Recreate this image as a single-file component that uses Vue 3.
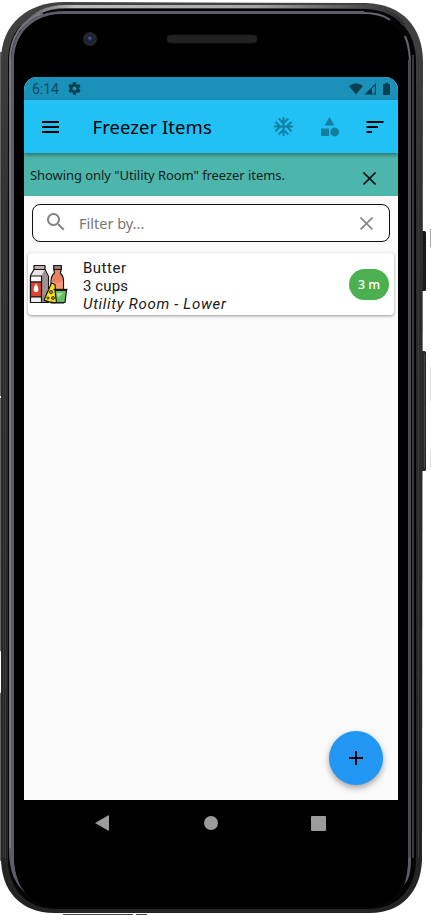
<script setup>
const item = { name: 'Butter', amount: '3 cups', place: 'Utility Room - Lower', age: '3 m' }
</script>

<template>
  <div class="device">
    <svg class="shell" viewBox="0 0 431 915" width="431" height="915">
      <defs>
        <linearGradient id="rim" x1="0" y1="0" x2="1" y2="0">
          <stop offset="0" stop-color="#555" />
          <stop offset=".14" stop-color="#bdbdbd" />
          <stop offset=".6" stop-color="#a6a6a6" />
          <stop offset="1" stop-color="#2c2c2e" />
        </linearGradient>
        <linearGradient id="fade" x1="0" y1="0" x2="0" y2="1">
          <stop offset="0" stop-color="#424242" />
          <stop offset=".25" stop-color="#2e2e2e" />
          <stop offset="1" stop-color="#232323" />
        </linearGradient>
      </defs>
      <path fill="#646464" d="M0 52h2v344H0zM0 398h2v253H0zM0 693h2v168H0z" />
      <rect x="421" y="231" width="5" height="60" rx="1.500" fill="#191919" />
      <rect x="421" y="351" width="5" height="120" rx="1.500" fill="#292929" />
      <path stroke="#444" d="M424.500 354v114" />
      <path stroke="#aaa" d="M430.500 229v18" />
      <path stroke="#ddd" d="M430.500 367v34M430.500 450v18" />
      <path fill="url(#fade)" d="M1 60C1 24 28 2 64 2L366 3C402 4 423 27 423 62L422 860C421 892 401 913 370 913H54C21 913 1 891 1 858Z" />
      <path fill="#050505" d="M8 61C8 28 31 9 65 9H363C396 9 416 30 416 62V858C416 889 398 909 367 909H57C26 909 8 889 8 858Z" />
      <path fill="none" stroke="url(#rim)" stroke-width="3" d="M21 30C33 13 46 6.500 66 6.500H366C382 6.500 394 12 404 25" />
      <path fill="none" stroke="#3a3a3a" d="M3.500 60V858M5.500 60V858M418.500 60V858" />
      <path fill="none" stroke="#39393c" stroke-width="2" d="M413 55V858" />
      <path fill="none" stroke="#282828" d="M54 911.500H370" />
      <path fill="none" stroke="#77777a" stroke-width="2" d="M10 850V60C10 39 22 18 43 14" />
      <path fill="none" stroke="#5c5d68" stroke-width="3" d="M12.500 850V61C12.500 33 32 12.500 64 12.500H364" />
      <path fill="none" stroke="#656570" stroke-width="2" d="M364 13Q381 13 390 20M405 36Q410 47 410 65" />
      <path fill="none" stroke="#4b4b50" stroke-width="3" d="M409.500 60V860" />
      <path fill="#5c5d68" d="M9 848H14C14 873 18 887 29 896C14 884 9 871 9 848ZM408 858H411C411 872 409 880 404 885Q408 875 408 858Z" />
      <path fill="#000" d="M14 63C14 32 34 14 65 14H361C390 14 408 31 408 63V856C408 886 394 907 365 907H60C29 907 14 885 14 856Z" />
      <path stroke="#444" d="M63 914.500H133M136 914.500H147" />
      <circle cx="90" cy="39" r="7" fill="#262626" />
      <circle cx="90" cy="39" r="4" fill="#1b2145" />
      <circle cx="90" cy="38.500" r="2" fill="#323e77" />
      <circle cx="89.500" cy="38" r=".8" fill="#7c88b5" />
      <rect x="167" y="35" width="90" height="8" rx="3.500" fill="#222" stroke="#171717" />
    </svg>

    <main class="screen">
      <div class="status">
        <span class="time">6:14</span>
        <svg class="gear" width="13" height="13" viewBox="2 2 20 20"><path d="M19.140 12.940c.04-.3.060-.61.060-.94s-.02-.64-.07-.94l2.030-1.580a.5.5 0 0 0 .12-.61l-1.920-3.320a.5.5 0 0 0-.59-.22l-2.390.96a7 7 0 0 0-1.620-.94l-.36-2.540A.5.5 0 0 0 13.920 2h-3.840a.5.5 0 0 0-.48.410l-.36 2.540a7 7 0 0 0-1.620.94l-2.390-.96a.5.5 0 0 0-.59.220L2.720 8.470a.5.5 0 0 0 .12.610l2.030 1.580a6 6 0 0 0 0 2.280l-2.030 1.580a.5.5 0 0 0-.12.610l1.920 3.320c.12.220.37.290.59.220l2.390-.96c.5.380 1.030.7 1.620.94l.36 2.540c.05.240.24.410.48.410h3.840c.24 0 .44-.17.470-.41l.36-2.540a7 7 0 0 0 1.620-.94l2.390.96c.22.080.47 0 .59-.22l1.920-3.320a.5.5 0 0 0-.12-.61ZM12 15.200a3.200 3.200 0 1 1 0-6.400 3.200 3.200 0 0 1 0 6.400Z" /></svg>
        <svg class="signals" width="43" height="14" viewBox="0 0 43 14">
          <path d="M1 4Q8-1.500 15 4L8 12.500Z" />
          <path d="M16.500 12.500 28 1V12.500ZM24 6.500V11.500H26.800V3.700Z" fill-rule="evenodd" />
          <path d="M35 2h2.200V.7h3V2H42v11h-7Z" />
        </svg>
      </div>

      <header class="bar">
        <svg width="18" height="12" viewBox="0 0 18 12"><path d="M0 0h17v2H0zM0 5h17v2H0zM0 10h17v2H0z" /></svg>
        <h1>Freezer Items</h1>
        <svg class="dim snow" width="24" height="24" viewBox="0 0 24 24"><path d="M22 11h-4.170l3.240-3.240-1.410-1.420L15 11h-2V9l4.660-4.660-1.420-1.410L13 6.170V2h-2v4.170L7.760 2.930 6.340 4.340 11 9v2H9L4.340 6.340 2.930 7.760 6.170 11H2v2h4.170l-3.240 3.240 1.410 1.420L9 13h2v2l-4.660 4.660 1.420 1.410L11 17.830V22h2v-4.170l3.240 3.240 1.420-1.410L13 15v-2h2l4.660 4.660 1.410-1.420L17.830 13H22z" /></svg>
        <svg class="dim shapes" width="22" height="22" viewBox="0 0 22 22"><path d="m10.500 1 5 8.500h-10zM2 12.500h8V20H2z" /><circle cx="15.700" cy="16" r="4.400" /></svg>
        <svg class="sort" width="18" height="12" viewBox="0 0 18 12"><path d="M.5 0h17v2H.5zM.5 5h11.500v2H.5zM.5 10h5.500v2H.5z" /></svg>
      </header>

      <div class="notice">
        <p>Showing only "Utility Room" freezer items.</p>
        <svg width="13" height="13" viewBox="0 0 13 13"><path d="m.5.5 12 12m0-12-12 12" fill="none" stroke="#111" stroke-width="1.600" /></svg>
      </div>

      <div class="filter">
        <svg width="18" height="18" viewBox="3 3 18 18"><path fill="#858585" d="M15.500 14h-.79l-.28-.27A6.500 6.500 0 1 0 13.730 14.430l.27.28v.79l5 4.990L20.490 19zm-6 0a4.500 4.500 0 1 1 0-9 4.500 4.500 0 0 1 0 9z" /></svg>
        <span>Filter by...</span>
        <svg class="clear" width="13" height="13" viewBox="0 0 13 13"><path d="m.5.5 12 12m0-12-12 12" fill="none" stroke="#858585" stroke-width="1.600" /></svg>
      </div>

      <article class="card">
        <svg class="dairy" width="40" height="40" viewBox="0 0 40 40" stroke="#151515" stroke-width="1.200" stroke-linejoin="round">
          <path d="M25 1.500h7v5l-.7 2.500Q35 13 34.500 18v21H22V17q0-5 3.500-8L25 6.500Z" fill="#e98263" />
          <path d="M24.800 1.500h7.500v4h-7.500z" fill="#997e7c" />
          <path d="M22.600 17q6 4 11.300 0V31H22.600z" fill="#f49a78" stroke="none" />
          <path d="M5 1.500h11v4H5z" fill="#bcaeab" />
          <path d="M5 5.500h11l3.500 7V38.500H1.500v-27z" fill="#e7e4e3" />
          <path d="m15.500 6-3.200 6v26h6.700V13z" fill="#9c9090" stroke="none" />
          <path d="M1.500 12H12.500V18H1.500z" fill="#fff" />
          <path d="M1.500 18H12.500V33H1.500z" fill="#df422e" />
          <path d="M1.500 33H12.500v5.500H1.500z" fill="#f2f0ef" />
          <path d="M7 20.500C.5 30 13.500 30 7 20.500Z" fill="#fff" stroke="#fff" />
          <path d="m15 36 7.500-17 3.500 1.500 2 18Q20 39 15 36Z" fill="#f5df19" />
          <g fill="#c19100" stroke-width=".8"><circle cx="22" cy="28" r="1.600" /><circle cx="24" cy="34" r="1.500" /><circle cx="19" cy="34" r="1" /></g>
          <path d="M26 26.500h11.500L36 38.500h-8.500Z" fill="#65bd64" />
          <path d="M24.500 25.500h14" stroke-width="1.400" />
          <path d="M28 29h6l-5 5Z" fill="#a8dfa0" stroke="none" />
        </svg>
        <div class="details">
          <span class="name">{{ item.name }}</span>
          <span class="amount">{{ item.amount }}</span>
          <em>{{ item.place }}</em>
        </div>
        <span class="age">{{ item.age }}</span>
      </article>

      <button class="add" aria-label="Add item">
        <svg width="14" height="14" viewBox="0 0 14 14"><path d="M6 0h2v6h6v2H8v6H6V8H0V6h6z" /></svg>
      </button>
    </main>

    <nav class="system">
      <svg width="14" height="16" viewBox="0 0 14 16"><path d="M0 8 13 .5Q14 0 14 1v14q0 1-1 .5z" /></svg>
      <svg class="home" width="14" height="14" viewBox="0 0 14 14"><circle cx="7" cy="7" r="7" /></svg>
      <svg width="15" height="15" viewBox="0 0 15 15"><rect width="15" height="15" rx="1" /></svg>
    </nav>
  </div>
</template>

<style>
body { margin: 0; background: #fff; }
</style>

<style scoped>
* { box-sizing: border-box; }
svg { display: block; flex: none; }
.device { position: relative; width: 431px; height: 915px; padding: 77px 33px 0 24px; overflow: hidden; font-family: "Noto Sans", sans-serif; color: #202020; }
.shell { position: absolute; left: 0; top: 0; }
.screen { position: relative; width: 374px; height: 723px; background: #fafafa; border-radius: 13px 13px 0 0; overflow: hidden; }
.status { height: 23px; background: #1a91b9; display: flex; align-items: center; padding: 0 7px 0 8px; fill: #0b4053; }
.time { font: 14px/23px Roboto, sans-serif; color: #0b4b60; width: 36px; padding-top: 1px; letter-spacing: -.05px; }
.signals { margin-left: auto; }
.bar { position: relative; z-index: 1; height: 53px; background: #21c1f5; box-shadow: 0 2px 4px rgba(0,0,0,.4); display: flex; align-items: center; padding: 0 14px 0 18px; }
h1 { margin: 0 auto 0 32.500px; font-size: 18.500px; line-height: 24px; font-weight: 400; color: #000; white-space: nowrap; letter-spacing: .05px; }
.dim { fill: #147e9f; }
.snow { width: 23px; height: 23px; margin-right: 24px; }
.shapes { margin-right: 25px; }
.notice { height: 43px; background: #4db6ac; display: flex; align-items: center; padding: 0 22px 0 6px; }
.notice p { margin: 0 auto 0 0; font-size: 13px; line-height: 18px; white-space: nowrap; color: #142220; letter-spacing: -.06px; }
.notice svg { margin-top: 7px; }
.filter { margin: 8px 8px 0; height: 38px; border: 1px solid #111; border-radius: 8px; background: #fff; display: flex; align-items: center; padding: 0 16px 0 14px; }
.filter span { margin-left: 14px; font-size: 14.500px; color: #777; }
.filter svg:first-child { margin-top: -2px; }
.clear { margin-left: auto; margin-top: 1px; }
.card { margin: 11px 4px 0; height: 62px; border-radius: 3px; background: #fff; box-shadow: 0 1px 3px rgba(0,0,0,.4); display: flex; align-items: center; padding-right: 5px; }
.dairy { margin-left: 1px; }
.details { margin-left: 14px; display: flex; flex-direction: column; font-family: Roboto, sans-serif; font-size: 15px; line-height: 18px; white-space: nowrap; letter-spacing: .1px; padding-top: 3px; }
.details .name { letter-spacing: .5px; }
.details em { letter-spacing: .7px; }
.age { margin-left: auto; width: 40px; height: 31px; border-radius: 16px; background: #4caf50; color: #fff; text-align: center; font-size: 12.500px; font-weight: 500; line-height: 32px; }
.add { position: absolute; right: 15px; bottom: 15px; width: 54px; height: 54px; border: 0; border-radius: 50%; background: #2196f3; box-shadow: 0 3px 6px rgba(0,0,0,.35); display: flex; align-items: center; justify-content: center; padding: 0; }
.system { position: relative; height: 46px; display: flex; align-items: center; justify-content: space-between; padding: 0 72px 0 71px; fill: #9b9b9b; }
.home { margin-left: 1px; }
</style>
